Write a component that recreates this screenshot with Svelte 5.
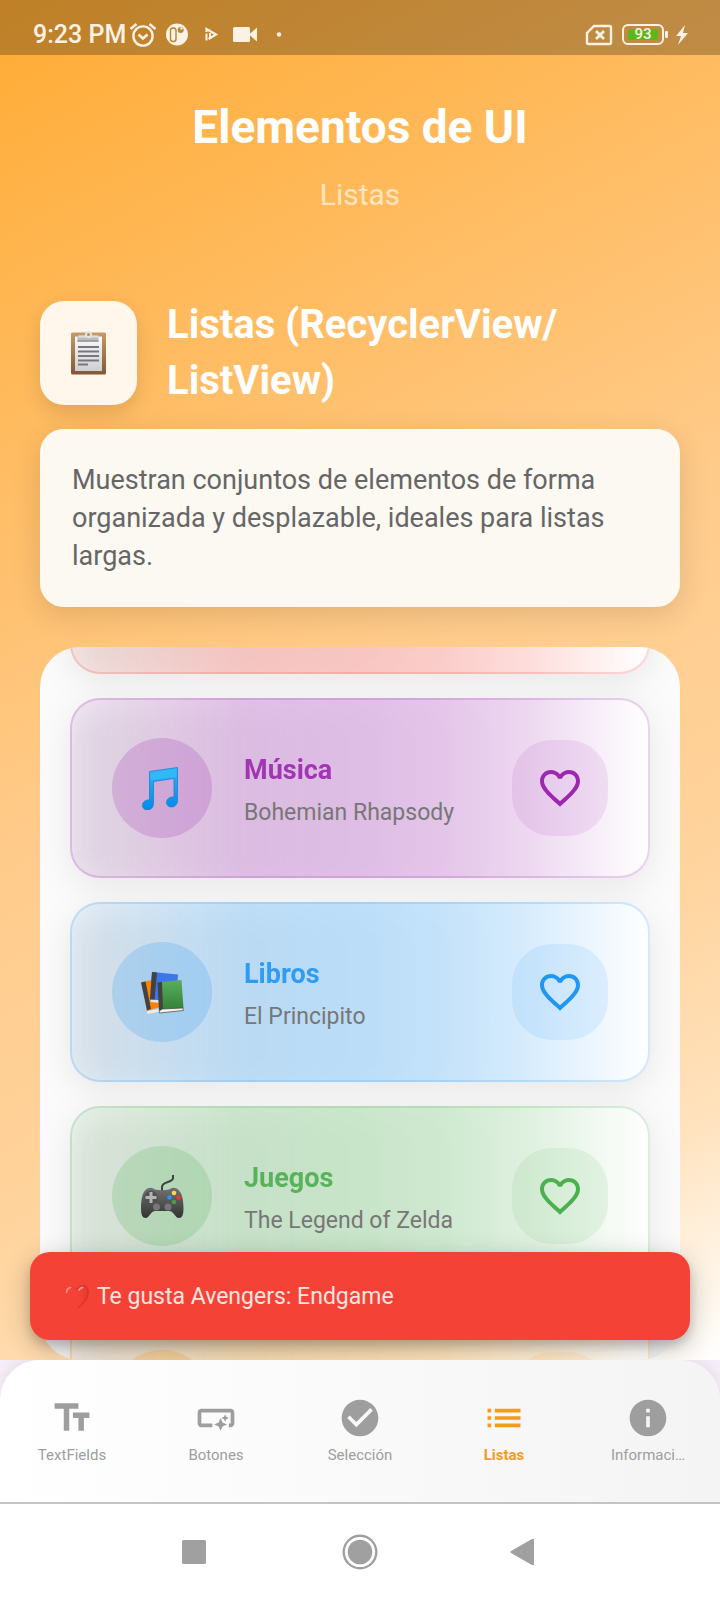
<script>
  const items = [
    { color: '#f44336', art: '', title: '', detail: '' },
    { color: '#9c27b0', art: 'music', title: 'Música', detail: 'Bohemian Rhapsody' },
    { color: '#2196f3', art: 'books', title: 'Libros', detail: 'El Principito' },
    { color: '#4caf50', art: 'game', title: 'Juegos', detail: 'The Legend of Zelda' },
    { color: '#ff9800', art: '', title: '', detail: '' }
  ];

  const tabs = [
    { label: 'TextFields', icon: 'M2.5 4v3h5v12h3V7h5V4h-13zm19 5h-9v3h3v7h3v-7h3V9z' },
    {
      label: 'Botones',
      icon: 'M22 9v6c0 1.1-.9 2-2 2h-1v-2h1V9H4v6h6v2H4c-1.1 0-2-.9-2-2V9c0-1.1.9-2 2-2h16c1.1 0 2 .9 2 2zM14.5 19l1.09-2.41L18 15.5l-2.41-1.09L14.5 12l-1.09 2.41L11 15.5l2.41 1.09L14.5 19zM17 14l.62-1.38L19 12l-1.38-.62L17 10l-.62 1.38L15 12l1.38.62L17 14z'
    },
    {
      label: 'Selección',
      icon: 'M12 2C6.48 2 2 6.48 2 12s4.48 10 10 10 10-4.48 10-10S17.52 2 12 2zm-2 15l-5-5 1.41-1.41L10 14.17l7.59-7.59L19 8l-9 9z'
    },
    {
      label: 'Listas',
      icon: 'M3 13h2v-2H3v2zm0 4h2v-2H3v2zm0-8h2V7H3v2zm4 4h14v-2H7v2zm0 4h14v-2H7v2zM7 7v2h14V7H7z'
    },
    {
      label: 'Informaci…',
      icon: 'M12 2C6.48 2 2 6.48 2 12s4.48 10 10 10 10-4.48 10-10S17.52 2 12 2zm1 15h-2v-6h2v6zm0-8h-2V7h2v2z'
    }
  ];

  let active = $state('Listas');
</script>

<div class="screen">
  <main>
    <div class="status">
      <span class="time">9:23 PM</span>
      <div class="status-icons">
        <svg viewBox="0 0 28 28" fill="none" stroke="#fbf1e4" stroke-width="2.4">
          <circle cx="14" cy="15" r="9.600" />
          <path d="M9.500 13.500l4.500 4 4.500-4" stroke-width="2.600" />
          <path d="M1.500 8l6-5M26.500 8l-6-5" />
        </svg>
        <svg viewBox="0 0 28 28">
          <circle cx="14" cy="13.500" r="11" fill="#fbf1e4" />
          <rect x="7.500" y="7" width="5.500" height="13.500" rx="2.500" fill="none" stroke="#bf8535" stroke-width="1.400" />
          <circle cx="17.700" cy="9" r="3" fill="#bf8535" />
          <circle cx="18.500" cy="7.500" r="1.200" fill="#fbf1e4" />
        </svg>
        <svg viewBox="0 0 28 28" fill="none" stroke="#fbf1e4">
          <path d="M9.500 11V8l9.500 5.500-7.500 4.500" stroke-width="2.200" />
          <path d="M9.500 12.500v7M13 12v6" stroke-width="2" />
        </svg>
        <svg viewBox="0 0 28 28" fill="#fbf1e4">
          <rect x="2" y="6" width="17" height="15" rx="1.500" />
          <path d="M18 13.500l8-7v14z" />
        </svg>
        <svg viewBox="0 0 28 28" fill="#fbf1e4"><circle cx="14" cy="13.500" r="2.200" /></svg>
      </div>
      <div class="status-right">
        <svg class="sim" viewBox="0 0 28 22" fill="none" stroke="#fbf1e4" stroke-width="2.400">
          <path d="M9 2h15.500q1.500 0 1.500 1.500v15q0 1.500-1.500 1.500h-21Q2 20 2 18.500V9z" />
          <path d="M11 7l8 8M19 7l-8 8" stroke-width="2.800" />
        </svg>
        <div class="battery"><span>93</span></div>
        <svg class="bolt" viewBox="0 0 14 20" fill="#fbf1e4"><path d="M10 0L1 11h5L3 20l10-12H8z" /></svg>
      </div>
    </div>

    <header>
      <h1>Elementos de UI</h1>
      <p>Listas</p>
    </header>

    <div class="content">
      <section class="intro">
        <div class="badge">
          <svg viewBox="0 0 44 44">
            <defs>
              <linearGradient id="wood" x1="0" y1="0" x2="0" y2="1">
                <stop offset="0" stop-color="#c79a66" /><stop offset="1" stop-color="#80583a" />
              </linearGradient>
              <linearGradient id="paper" x1="0" y1="0" x2="0" y2="1">
                <stop offset="0" stop-color="#fafafa" /><stop offset="1" stop-color="#cfcfcf" />
              </linearGradient>
            </defs>
            <rect x="4" y="1.500" width="35" height="42" rx="1.500" fill="url(#wood)" />
            <rect x="8" y="5.500" width="27" height="34.500" fill="url(#paper)" />
            <path d="M10.500 10.500V6q0-1.500 2-1.500h5q1-3.500 4-3.500t4 3.500h4q2 0 2 1.500v4.500z" fill="#bdbdbd" />
            <path d="M11.500 5.500h20" stroke="#e0e0e0" stroke-width="2" />
            <path d="M10.500 10h21" stroke="#929292" stroke-width="1.500" />
            <circle cx="21.500" cy="3.500" r="2.500" fill="#b58d63" stroke="#e4e4e4" stroke-width="2" />
            <path d="M11 16h21M11 20.500h21M11 25h21M11 29.500h21M11 33.500h10" stroke="#77777b" stroke-width="1.800" />
          </svg>
        </div>
        <h2>Listas (RecyclerView/<wbr />ListView)</h2>
      </section>

      <p class="description">
        Muestran conjuntos de elementos de forma organizada y desplazable, ideales para listas largas.
      </p>

      <div class="panel">
        <ul>
          {#each items as item}
            <li style="--tone: {item.color}">
              <div class="card">
                <div class="avatar">
                  {#if item.art === 'music'}
                    <svg viewBox="0 0 44 44">
                      <defs>
                        <linearGradient id="note" x1="0" y1="0" x2="0" y2="1">
                          <stop offset="0" stop-color="#2fb6fa" /><stop offset="1" stop-color="#0588e6" />
                        </linearGradient>
                      </defs>
                      <path d="M9.500 5.500L37.500 1.500V34.500c0 4-3 6.500-6 6.500s-5-2-5-4.500c0-3.500 3.500-6 7.500-5.500V12.500l-20.500 3V37.500c0 4-3 6.500-6 6.500s-5-2-5-4.500c0-3.500 3-6 7-5.500z" fill="url(#note)" stroke="#1684cd" stroke-width=".8" />
                      <path d="M10.500 6.500L36.500 2.800v8L10.500 14.500z" fill="#32b8f8" />
                    </svg>
                  {:else if item.art === 'books'}
                    <svg viewBox="0 0 44 44">
                      <defs>
                        <linearGradient id="cover" x1="0" y1="0" x2="0" y2="1">
                          <stop offset="0" stop-color="#5bae5e" /><stop offset="1" stop-color="#2f7f35" />
                        </linearGradient>
                      </defs>
                      <path d="M2 12l10-2 8 27-13 4z" fill="#ff8200" />
                      <path d="M1 12.500l4.500-1L11 39l-4 1.500z" fill="#424242" />
                      <path d="M7 41l13-2v2.500L7.500 44z" fill="#f2ede3" />
                      <path d="M12 2l26 2.500-2 28-26-2z" fill="#3d76ea" />
                      <path d="M12 2l5 .5-2.500 28L10 30z" fill="#424242" />
                      <path d="M10.500 29.500l10 .8v2.700l-10-1z" fill="#e5e5e5" />
                      <path d="M21 12l20.500-2L43.500 38l-23 3.500z" fill="url(#cover)" />
                      <path d="M17.500 12.500l4.500-.5 1 27-4 2.500z" fill="#424242" />
                      <path d="M19 41l3.500-2 20.500-1 .3 2.500L19.500 43z" fill="#f5f2eb" stroke="#3d4a36" stroke-width=".7" />
                    </svg>
                  {:else if item.art === 'game'}
                    <svg viewBox="0 0 44 44">
                      <defs>
                        <linearGradient id="pad" x1="0" y1="0" x2="0" y2="1">
                          <stop offset="0" stop-color="#727272" /><stop offset="1" stop-color="#333" />
                        </linearGradient>
                      </defs>
                      <path d="M22 17v-4c0-6 11-4 11-9V1" fill="none" stroke="#404040" stroke-width="2" />
                      <path d="M9 14q3-.8 6 1.500 7 1.500 14 0 3-2.300 6-1.500c6 1.500 8.500 9 8.500 21q0 9-4.500 9c-4 0-5-7-10-7H15.500c-5 0-6 7-10 7Q1 44 1 35C1 23 3 15.500 9 14z" fill="url(#pad)" />
                      <circle cx="11" cy="23.500" r="6.800" fill="#515151" />
                      <path d="M11 18v11M5.500 23.500h11" stroke="#b5b5b5" stroke-width="3" />
                      <circle cx="16.500" cy="33" r="3.500" fill="#777" />
                      <circle cx="28" cy="33" r="3.500" fill="#777" />
                      <circle cx="34" cy="19" r="2.300" fill="#ffd54f" />
                      <circle cx="29.500" cy="23.500" r="2.300" fill="#2196f3" />
                      <circle cx="38.500" cy="23.500" r="2.300" fill="#e53935" />
                      <circle cx="34" cy="28" r="2.300" fill="#43a047" />
                    </svg>
                  {/if}
                </div>
                <div class="texts">
                  {#if item.title}
                    <h3>{item.title}</h3>
                    <p>{item.detail}</p>
                  {/if}
                </div>
                <button class="like" type="button" aria-label="Me gusta {item.title}">
                  <svg viewBox="0 0 24 24">
                    <path d="M16.500 3c-1.740 0-3.410.810-4.500 2.090C10.910 3.810 9.240 3 7.500 3 4.420 3 2 5.420 2 8.500c0 3.780 3.400 6.860 8.550 11.540L12 21.350l1.450-1.320C18.600 15.360 22 12.280 22 8.500 22 5.420 19.580 3 16.500 3zm-4.400 15.550l-.1.100-.1-.1C7.140 14.240 4 11.390 4 8.500 4 6.500 5.500 5 7.500 5c1.540 0 3.040.990 3.570 2.360h1.870C13.460 5.990 14.960 5 16.500 5c2 0 3.500 1.500 3.500 3.500 0 2.890-3.140 5.740-7.900 10.050z" />
                  </svg>
                </button>
              </div>
            </li>
          {/each}
        </ul>
      </div>
    </div>

    <div class="snackbar" role="status">
      <svg viewBox="0 0 26 26">
        <defs>
          <linearGradient id="love" x1="0" y1="0" x2="1" y2="0">
            <stop offset="0.600" stop-color="#f44336" /><stop offset="1" stop-color="#e23a32" />
          </linearGradient>
        </defs>
        <path d="M13 25C5 19 1 14 1 8c0-7 9-9 12-2 3-7 12-5 12 2 0 6-4 11-12 17z" fill="url(#love)" />
        <path d="M13 6c3-7 11-5 11 2 0 6-3 10-10 16" fill="none" stroke="#d5342e" stroke-width="1.300" />
        <path d="M1.500 8c0-6 7-8 11-2.500" fill="none" stroke="#dd3a31" stroke-width="1" />
        <path d="M2.500 8q.5-4 4-4.500M15 6q1.500-2.500 3.500-2.500" fill="none" stroke="#ff8a75" stroke-width="2" stroke-linecap="round" />
      </svg>
      <span>Te gusta Avengers: Endgame</span>
    </div>
  </main>

  <div class="tabbar">
    <nav>
      {#each tabs as tab}
        <button type="button" class:active={active === tab.label} onclick={() => (active = tab.label)}>
          <svg viewBox="0 0 24 24"><path d={tab.icon} /></svg>
          <span>{tab.label}</span>
        </button>
      {/each}
    </nav>
  </div>

  <div class="system">
    <button type="button" aria-label="Recientes">
      <svg viewBox="0 0 36 36"><rect x="6" y="6" width="24" height="24" rx="1.500" /></svg>
    </button>
    <button type="button" aria-label="Inicio">
      <svg viewBox="0 0 36 36">
        <circle cx="18" cy="18" r="16.300" fill="none" stroke="#a0a0a0" stroke-width="2.400" />
        <circle cx="18" cy="18" r="12.300" />
      </svg>
    </button>
    <button type="button" aria-label="Atrás">
      <svg viewBox="0 0 36 36"><path d="M3 17L24 5q2-.8 2 1v24q0 1.800-2 1L3 19q-1.500-1 0-2z" /></svg>
    </button>
  </div>
</div>

<style>
  :global(body) {
    margin: 0;
  }
  .screen {
    display: flex;
    flex-direction: column;
    height: 100vh;
    font-family: Roboto, 'Liberation Sans', sans-serif;
    background: #fff;
  }
  h1,
  h2,
  h3,
  p,
  ul {
    margin: 0;
    padding: 0;
  }
  button {
    border: 0;
    padding: 0;
    background: none;
    font: inherit;
    cursor: pointer;
  }
  svg {
    display: block;
    flex: none;
  }
  main {
    flex: 1;
    min-height: 0;
    display: flex;
    flex-direction: column;
    position: relative;
    background: linear-gradient(152deg, #ffab33 0%, #ffbd65 28%, #ffcb8b 49%, #ffd39c 70%, #ffe1bb 85%, #fff 100%);
  }
  .status {
    box-sizing: border-box;
    height: 55px;
    padding: 14px 31px 0 33px;
    display: flex;
    align-items: center;
    background: rgba(0, 0, 0, 0.25);
    color: #fbf1e4;
  }
  .time {
    font-size: 25px;
    font-weight: 500;
    line-height: 28px;
  }
  .status-icons {
    display: flex;
    gap: 6px;
    margin-left: 3px;
  }
  .status-icons svg {
    width: 28px;
    height: 28px;
  }
  .status-right {
    display: flex;
    align-items: center;
    gap: 9px;
    margin-left: auto;
  }
  .sim {
    width: 28px;
    height: 22px;
  }
  .battery {
    position: relative;
    box-sizing: border-box;
    width: 42px;
    height: 21px;
    padding: 3px 4px;
    margin-right: 2px;
    border: 2px solid #fbf1e4;
    border-radius: 6px;
  }
  .battery span {
    display: block;
    background: #5cb81a;
    border-radius: 2px;
    font-size: 15px;
    font-weight: 500;
    line-height: 11px;
    text-align: center;
  }
  .battery::after {
    content: '';
    position: absolute;
    right: -6px;
    top: 5px;
    width: 3px;
    height: 7px;
    border-radius: 1px;
    background: #fbf1e4;
  }
  .bolt {
    width: 14px;
    height: 20px;
  }
  header {
    padding-top: 44px;
    text-align: center;
    color: #fff;
  }
  h1 {
    font-size: 46px;
    line-height: 56px;
    font-weight: 700;
  }
  header p {
    margin-top: 20px;
    font-size: 30px;
    line-height: 40px;
    color: #ffe4bf;
  }
  .content {
    flex: 1;
    min-height: 0;
    display: flex;
    flex-direction: column;
    padding: 82px 40px 0;
  }
  .intro {
    display: flex;
    align-items: center;
    gap: 30px;
  }
  .badge {
    display: flex;
    align-items: center;
    justify-content: center;
    width: 97px;
    height: 104px;
    border-radius: 24px;
    background: #fff6ec;
    box-shadow: 0 8px 20px rgba(0, 0, 0, 0.12);
  }
  .badge svg,
  .avatar svg {
    width: 44px;
    height: 44px;
  }
  h2 {
    flex: 1;
    font-size: 40px;
    line-height: 56px;
    font-weight: 700;
    color: #fff;
  }
  .description {
    margin-top: 20px;
    padding: 32px;
    border-radius: 24px;
    background: #fcf8f2;
    box-shadow:
      0 8px 30px rgba(0, 0, 0, 0.12),
      inset 0 0 24px #fffaf0;
    font-size: 27px;
    line-height: 38px;
    color: #666;
  }
  .panel {
    flex: 1;
    min-height: 0;
    margin-top: 40px;
    overflow: hidden;
    border-radius: 40px;
    background: #fbfbfb;
  }
  ul {
    list-style: none;
    display: flex;
    flex-direction: column;
    gap: 24px;
    padding: 0 30px;
    margin-top: -153px;
  }
  li {
    position: relative;
    isolation: isolate;
    flex: none;
  }
  li::before {
    content: '';
    position: absolute;
    z-index: -1;
    inset: 8px 0 -8px;
    border-radius: 30px;
    background: rgba(0, 0, 0, 0.08);
    filter: blur(16px);
  }
  .card {
    box-sizing: border-box;
    height: 180px;
    display: flex;
    align-items: center;
    gap: 32px;
    padding: 0 40px;
    border: 2px solid color-mix(in srgb, var(--tone) 20%, transparent);
    border-radius: 30px;
    background: linear-gradient(
      90deg,
      color-mix(in srgb, var(--tone) 8%, transparent),
      color-mix(in srgb, color-mix(in srgb, var(--tone) 42%, white) 65%, transparent) 30%,
      color-mix(in srgb, color-mix(in srgb, var(--tone) 35%, white) 82%, transparent) 50%,
      color-mix(in srgb, color-mix(in srgb, var(--tone) 28%, white) 92%, transparent) 65%,
      color-mix(in srgb, var(--tone) 18%, white) 79%,
      white
    );
    background-origin: border-box;
  }
  .avatar {
    display: flex;
    align-items: center;
    justify-content: center;
    width: 100px;
    height: 100px;
    border-radius: 50%;
    background: color-mix(in srgb, var(--tone) 20%, transparent);
  }
  .texts {
    flex: 1;
    min-width: 0;
  }
  h3 {
    font-size: 27px;
    line-height: 38px;
    font-weight: 700;
    color: var(--tone);
    opacity: 0.9;
  }
  .texts p {
    margin-top: 12px;
    font-size: 23px;
    line-height: 24px;
    color: #777;
  }
  .like {
    display: flex;
    align-items: center;
    justify-content: center;
    width: 96px;
    height: 96px;
    border-radius: 40px;
    background: color-mix(in srgb, var(--tone) 10%, transparent);
  }
  .like svg {
    width: 48px;
    height: 48px;
    fill: var(--tone);
  }
  .snackbar {
    position: absolute;
    left: 30px;
    right: 30px;
    bottom: 20px;
    box-sizing: border-box;
    height: 88px;
    padding: 2px 34px 0;
    display: flex;
    align-items: center;
    gap: 7px;
    border-radius: 20px;
    background: #f44336;
    box-shadow:
      0 6px 10px rgba(0, 0, 0, 0.14),
      0 8px 28px rgba(0, 0, 0, 0.24);
    font-size: 23px;
    line-height: 30px;
    color: #fde4e1;
  }
  .snackbar svg {
    width: 26px;
    height: 26px;
  }
  .tabbar {
    position: relative;
    background: #f8f1fa;
    border-bottom: 2px solid #c5c1cd;
    overflow: hidden;
  }
  nav {
    display: grid;
    grid-template-columns: repeat(5, 1fr);
    padding: 36px 0;
    border-radius: 40px 40px 0 0;
    background: linear-gradient(90deg, #fff, #f4f4f4);
    box-shadow: 0 -4px 20px rgba(60, 20, 80, 0.1);
  }
  nav button {
    display: flex;
    flex-direction: column;
    align-items: center;
    gap: 4px;
    color: #9e9e9e;
    font-size: 15px;
    line-height: 22px;
  }
  nav svg {
    width: 44px;
    height: 44px;
    fill: currentColor;
  }
  nav .active {
    color: #f59b1c;
    font-weight: 700;
  }
  .system {
    height: 96px;
    display: flex;
    align-items: center;
    justify-content: center;
    gap: 130px;
  }
  .system svg {
    width: 36px;
    height: 36px;
    fill: #a0a0a0;
  }
</style>
